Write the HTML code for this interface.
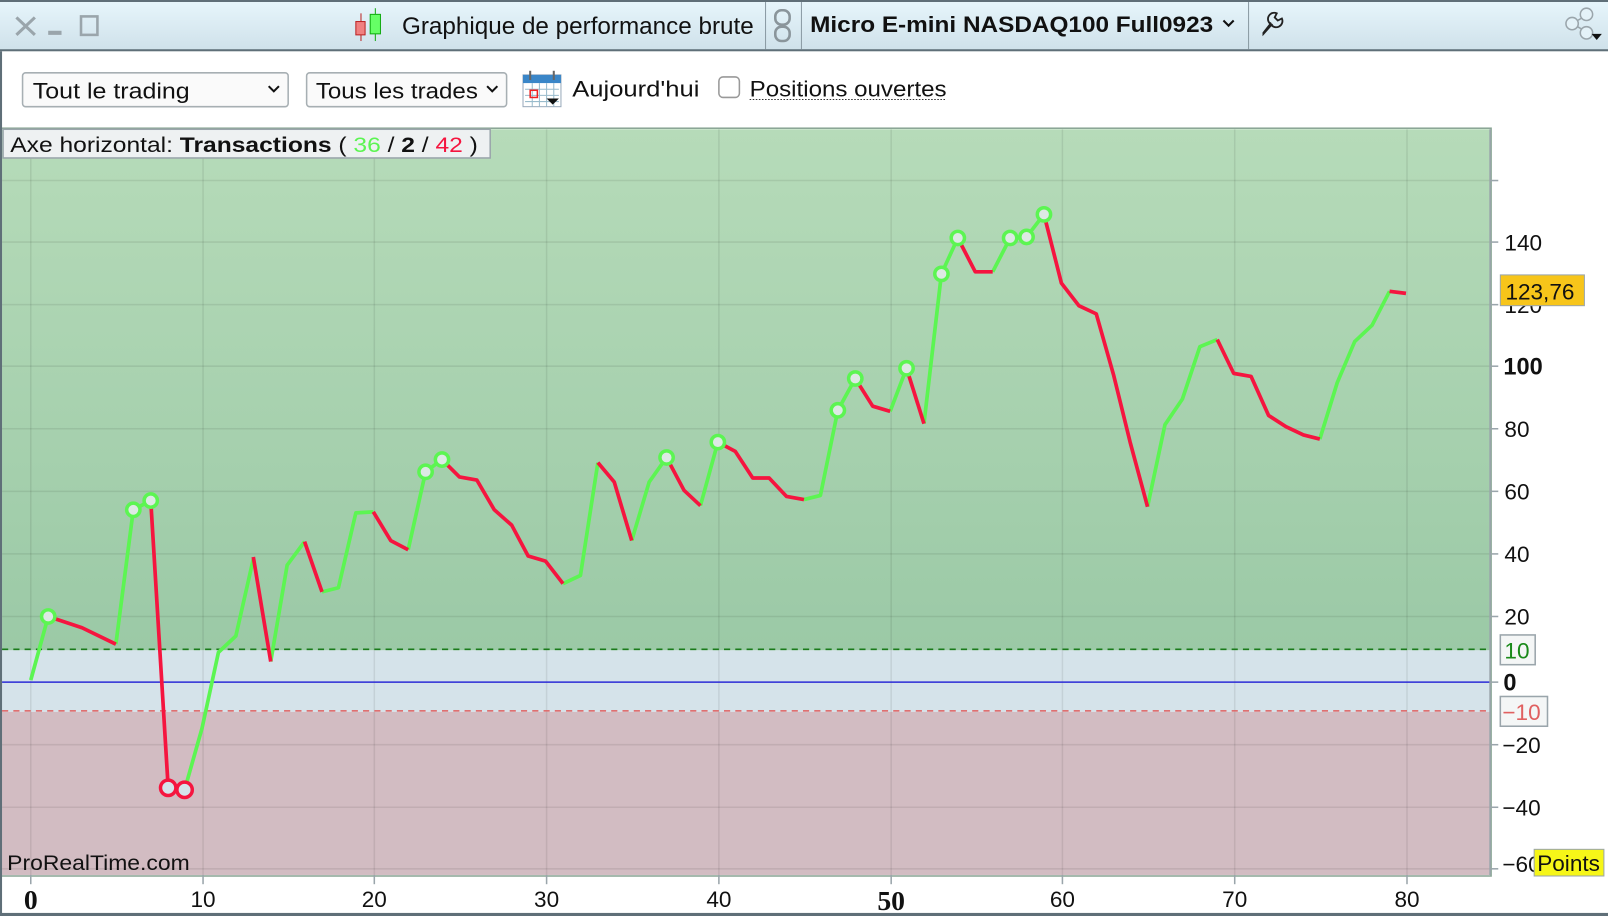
<!DOCTYPE html>
<html><head><meta charset="utf-8"><style>
body{margin:0;width:1608px;height:916px;overflow:hidden;background:#fff;font-family:"Liberation Sans",sans-serif;}
svg{display:block}
</style></head><body>
<svg width="1608" height="916" viewBox="0 0 1568 893" preserveAspectRatio="none" xmlns="http://www.w3.org/2000/svg" font-family="Liberation Sans, sans-serif">
<defs>
<linearGradient id="tb" x1="0" y1="0" x2="0" y2="1"><stop offset="0" stop-color="#e6f5fb"/><stop offset="1" stop-color="#cfe1ea"/></linearGradient>
<linearGradient id="gz" x1="0" y1="0" x2="0" y2="1"><stop offset="0" stop-color="#b6dbb9"/><stop offset="1" stop-color="#9bc9a6"/></linearGradient>
</defs>
<rect x="0" y="0" width="1568" height="2" fill="#5f6f78"/>
<rect x="0" y="2" width="1568" height="47" fill="url(#tb)"/>
<rect x="0" y="48" width="1568" height="2" fill="#5f6f78"/>
<rect x="746" y="2" width="1" height="46" fill="#8a9aa3"/>
<rect x="781" y="2" width="1" height="46" fill="#8a9aa3"/>
<rect x="1217" y="2" width="1" height="46" fill="#8a9aa3"/>
<path d="M16 17 L34 34 M34 17 L16 34" stroke="#9aa5ab" stroke-width="3"/>
<rect x="47" y="30" width="13" height="4" fill="#9aa5ab"/>
<rect x="79" y="16" width="16" height="18" fill="none" stroke="#9aa5ab" stroke-width="2.5"/>
<line x1="352" y1="13" x2="352" y2="40" stroke="#b22"/><rect x="347" y="21" width="9" height="13" fill="#f08080" stroke="#b22"/>
<line x1="366" y1="8" x2="366" y2="40" stroke="#1a1"/><rect x="361" y="14" width="10" height="19" fill="#6f6" stroke="#1a1"/>
<text x="392" y="33" font-size="23" fill="#111" textLength="343" lengthAdjust="spacingAndGlyphs">Graphique de performance brute</text>
<rect x="756" y="10" width="14" height="14" rx="6" fill="none" stroke="#8a959b" stroke-width="2.5"/>
<rect x="756" y="26" width="14" height="14" rx="6" fill="none" stroke="#8a959b" stroke-width="2.5"/>
<text x="790" y="31" font-size="22" font-weight="bold" fill="#111" textLength="393" lengthAdjust="spacingAndGlyphs">Micro E-mini NASDAQ100 Full0923</text>
<path d="M1193 20 l5 5 l5 -5" fill="none" stroke="#111" stroke-width="2"/>
<path d="M1232 33 l8 -9 a6 6 0 0 1 5 -11 l-2 4 3 3 4 -2 a6 6 0 0 1 -11 5 l-7 9 z" fill="none" stroke="#222" stroke-width="1.8"/>
<path d="M1547 15 L1533 23 L1547 31" fill="none" stroke="#9aa5ab" stroke-width="1.5"/>
<circle cx="1547" cy="14" r="6" fill="#e4f2f8" stroke="#9aa5ab" stroke-width="1.5"/>
<circle cx="1533" cy="23" r="6" fill="#e4f2f8" stroke="#9aa5ab" stroke-width="1.5"/>
<circle cx="1547" cy="32" r="6" fill="#e4f2f8" stroke="#9aa5ab" stroke-width="1.5"/>
<path d="M1552 33 h10 l-5 6z" fill="#111"/>
<rect x="22" y="71" width="259" height="33" rx="3" fill="#fafafa" stroke="#a7afb3" stroke-width="1.5"/>
<text x="32" y="96" font-size="22" fill="#111" textLength="153" lengthAdjust="spacingAndGlyphs">Tout le trading</text>
<path d="M262 84 l5 5 l5 -5" fill="none" stroke="#111" stroke-width="2"/>
<rect x="299" y="71" width="195" height="33" rx="3" fill="#fafafa" stroke="#a7afb3" stroke-width="1.5"/>
<text x="308" y="96" font-size="22" fill="#111" textLength="158" lengthAdjust="spacingAndGlyphs">Tous les trades</text>
<path d="M475 84 l5 5 l5 -5" fill="none" stroke="#111" stroke-width="2"/>
<rect x="510" y="73" width="37" height="31" fill="#fff" stroke="#9ab" />
<rect x="510" y="73" width="37" height="8" fill="#3a86c8"/>
<line x1="517" y1="69" x2="517" y2="78" stroke="#666" stroke-width="2"/><line x1="540" y1="69" x2="540" y2="78" stroke="#666" stroke-width="2"/>
<path d="M512 87h33M512 93h33M512 99h33M519 81v23M526 81v23M533 81v23M540 81v23" stroke="#9bc" stroke-width="1"/>
<rect x="517" y="88" width="7" height="7" fill="none" stroke="#e22" stroke-width="1.5"/>
<path d="M533 96 h12 l-6 6z" fill="#111"/>
<text x="558" y="94" font-size="22" fill="#111" textLength="124" lengthAdjust="spacingAndGlyphs">Aujourd'hui</text>
<rect x="701" y="75" width="20" height="20" rx="4" fill="#fff" stroke="#999" stroke-width="1.5"/>
<text x="731" y="94" font-size="22" fill="#111" textLength="192" lengthAdjust="spacingAndGlyphs">Positions ouvertes</text>
<line x1="731" y1="97" x2="923" y2="97" stroke="#333" stroke-dasharray="1.5 1.5"/>
<rect x="2" y="126" width="1451" height="508" fill="url(#gz)"/>
<rect x="2" y="634" width="1451" height="60" fill="#d5e3ea"/>
<rect x="2" y="694" width="1451" height="159" fill="#d2bcc2"/>
<g stroke="#000" stroke-opacity="0.08" stroke-width="1.5">
<line x1="30" y1="126" x2="30" y2="853"/><line x1="198" y1="126" x2="198" y2="853"/><line x1="365" y1="126" x2="365" y2="853"/><line x1="533" y1="126" x2="533" y2="853"/><line x1="701" y1="126" x2="701" y2="853"/><line x1="869" y1="126" x2="869" y2="853"/><line x1="1036" y1="126" x2="1036" y2="853"/><line x1="1204" y1="126" x2="1204" y2="853"/><line x1="1372" y1="126" x2="1372" y2="853"/>
<line x1="2" y1="176" x2="1453" y2="176"/><line x1="2" y1="236" x2="1453" y2="236"/><line x1="2" y1="297" x2="1453" y2="297"/><line x1="2" y1="357" x2="1453" y2="357"/><line x1="2" y1="418" x2="1453" y2="418"/><line x1="2" y1="479" x2="1453" y2="479"/><line x1="2" y1="540" x2="1453" y2="540"/><line x1="2" y1="601" x2="1453" y2="601"/><line x1="2" y1="726" x2="1453" y2="726"/><line x1="2" y1="787" x2="1453" y2="787"/><line x1="2" y1="847" x2="1453" y2="847"/>
</g>
<rect x="1" y="125" width="1453" height="729" fill="none" stroke="#8aa595" stroke-width="1.5"/>
<line x1="2" y1="633" x2="1453" y2="633" stroke="#1a7a1a" stroke-width="1.5" stroke-dasharray="6 5"/>
<line x1="2" y1="665" x2="1453" y2="665" stroke="#2b2bd6" stroke-width="1.5"/>
<line x1="2" y1="693" x2="1453" y2="693" stroke="#e06060" stroke-width="1.5" stroke-dasharray="6 5"/>
<g fill="none" stroke-width="3.6" stroke-linejoin="round">
<g stroke="#5cf552">
<polyline points="30,663 47,601"/><polyline points="113,628 130,497 147,488"/>
<polyline points="180,770 197,710 213,636 230,620 247,545"/><polyline points="264,645 280,551 297,528"/>
<polyline points="314,577 330,573 347,500 364,499"/><polyline points="398,536 415,460 431,448"/>
<polyline points="549,569 566,561 583,451"/><polyline points="616,527 633,470 650,446"/>
<polyline points="683,493 700,431"/><polyline points="784,487 800,483 817,400 834,369"/>
<polyline points="868,401 884,359"/><polyline points="901,413 918,267 934,232"/>
<polyline points="968,265 985,232 1001,231 1018,209"/><polyline points="1119,494 1136,414 1153,389 1170,338 1187,331"/>
<polyline points="1287,428 1304,373 1321,333 1338,317 1355,284"/>
</g>
<g stroke="#f5153f">
<polyline points="47,601 80,612 113,628"/><polyline points="147,488 164,768 180,770"/>
<polyline points="247,543 264,645"/><polyline points="297,528 314,577"/>
<polyline points="364,499 381,527 398,536"/>
<polyline points="431,448 448,465 465,468 482,497 499,512 515,542 532,547 549,569"/>
<polyline points="583,451 599,470 616,527"/><polyline points="650,446 667,478 683,493"/>
<polyline points="700,431 717,440 734,466 750,466 767,484 784,487"/>
<polyline points="834,369 851,396 868,401"/><polyline points="884,359 901,413"/>
<polyline points="934,232 951,265 968,265"/>
<polyline points="1018,209 1035,276 1052,298 1069,306 1086,366 1102,431 1119,494"/>
<polyline points="1187,331 1203,364 1220,367 1237,405 1254,416 1271,424 1287,428"/>
<polyline points="1355,284 1371,286"/>
</g>
</g>
<g fill="#dde9e4" stroke="#5cf552" stroke-width="3.4">
<circle cx="47" cy="601" r="6.5"/><circle cx="130" cy="497" r="6.5"/><circle cx="147" cy="488" r="6.5"/>
<circle cx="415" cy="460" r="6.5"/><circle cx="431" cy="448" r="6.5"/><circle cx="650" cy="446" r="6.5"/>
<circle cx="700" cy="431" r="6.5"/><circle cx="817" cy="400" r="6.5"/><circle cx="834" cy="369" r="6.5"/>
<circle cx="884" cy="359" r="6.5"/><circle cx="918" cy="267" r="6.5"/><circle cx="934" cy="232" r="6.5"/>
<circle cx="985" cy="232" r="6.5"/><circle cx="1001" cy="231" r="6.5"/><circle cx="1018" cy="209" r="6.5"/>
</g>
<g fill="#d5e3ea" stroke="#f5153f" stroke-width="3.4">
<circle cx="164" cy="768" r="7.5"/><circle cx="180" cy="770" r="7.5"/>
</g>
<rect x="3" y="126" width="475" height="28" fill="#eef1f2" stroke="#9aa5ab" stroke-width="1.5"/>
<text x="10" y="148" font-size="21" fill="#111" textLength="456" lengthAdjust="spacingAndGlyphs">Axe horizontal: <tspan font-weight="bold">Transactions</tspan> ( <tspan fill="#5cf552">36</tspan> / <tspan font-weight="bold">2</tspan> / <tspan fill="#f5153f">42</tspan> )</text>
<text x="7" y="848" font-size="21" fill="#111" textLength="178" lengthAdjust="spacingAndGlyphs">ProRealTime.com</text>
<g stroke="#9aa5ab" stroke-width="1.5">
<line x1="1453" y1="176" x2="1461" y2="176"/><line x1="1453" y1="236" x2="1461" y2="236"/><line x1="1453" y1="297" x2="1461" y2="297"/><line x1="1453" y1="357" x2="1461" y2="357"/><line x1="1453" y1="418" x2="1461" y2="418"/><line x1="1453" y1="479" x2="1461" y2="479"/><line x1="1453" y1="540" x2="1461" y2="540"/><line x1="1453" y1="601" x2="1461" y2="601"/><line x1="1453" y1="665" x2="1461" y2="665"/><line x1="1453" y1="726" x2="1461" y2="726"/><line x1="1453" y1="787" x2="1461" y2="787"/><line x1="1453" y1="847" x2="1461" y2="847"/>
<line x1="1453" y1="126" x2="1453" y2="853"/>
</g>
<g font-size="22" fill="#111">
<text x="1467" y="244">140</text><text x="1467" y="305">120</text><text x="1466" y="365" font-weight="bold" font-size="23">100</text>
<text x="1467" y="426">80</text><text x="1467" y="487">60</text><text x="1467" y="548">40</text><text x="1467" y="609">20</text>
<text x="1466" y="673" font-weight="bold" font-size="23">0</text>
<text x="1465" y="734">−20</text><text x="1465" y="795">−40</text><text x="1465" y="850">−60</text>
</g>
<rect x="1463" y="268" width="82" height="30" fill="#f7c51a" stroke="#9aa5ab"/>
<text x="1468" y="292" font-size="22" fill="#111">123,76</text>
<rect x="1463" y="619" width="34" height="29" fill="#f4f6f6" stroke="#9aa5ab" stroke-width="1.5"/>
<text x="1467" y="642" font-size="22" fill="#1a8a1a">10</text>
<rect x="1463" y="679" width="46" height="29" fill="#f4f6f6" stroke="#9aa5ab" stroke-width="1.5"/>
<text x="1465" y="702" font-size="22" fill="#e06060">−10</text>
<rect x="1496" y="828" width="68" height="26" fill="#f6f618" stroke="#9aa5ab"/>
<text x="1499" y="849" font-size="22" fill="#111">Points</text>
<g stroke="#9aa5ab" stroke-width="1.5">
<line x1="30" y1="853" x2="30" y2="862"/><line x1="198" y1="853" x2="198" y2="862"/><line x1="365" y1="853" x2="365" y2="862"/><line x1="533" y1="853" x2="533" y2="862"/><line x1="701" y1="853" x2="701" y2="862"/><line x1="869" y1="853" x2="869" y2="862"/><line x1="1036" y1="853" x2="1036" y2="862"/><line x1="1204" y1="853" x2="1204" y2="862"/><line x1="1372" y1="853" x2="1372" y2="862"/>
</g>
<g font-size="22" fill="#111" text-anchor="middle">
<text x="30" y="886" font-weight="bold" font-family="Liberation Serif, serif" font-size="27">0</text>
<text x="198" y="884">10</text><text x="365" y="884">20</text><text x="533" y="884">30</text><text x="701" y="884">40</text>
<text x="869" y="887" font-weight="bold" font-family="Liberation Serif, serif" font-size="27">50</text>
<text x="1036" y="884">60</text><text x="1204" y="884">70</text><text x="1372" y="884">80</text>
</g>
<rect x="0" y="890" width="1568" height="3" fill="#5f6f78"/>
<rect x="0" y="50" width="2" height="843" fill="#5f6f78"/>
</svg>
</body></html>
